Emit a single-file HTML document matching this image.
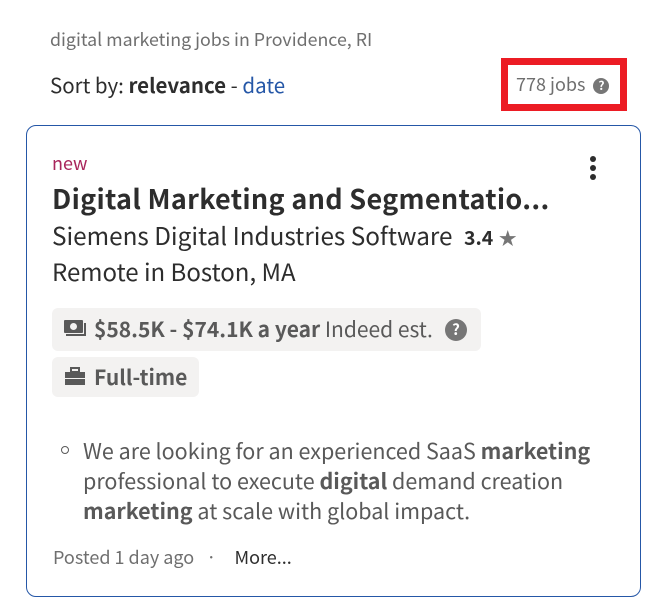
<!DOCTYPE html>
<html><head><meta charset="utf-8"><style>
*{margin:0;padding:0;box-sizing:border-box}
body{width:664px;height:605px;background:#fff;font-family:"Noto Sans CJK JP","Liberation Sans",sans-serif;color:#2d2d2d;position:relative;overflow:hidden}
.abs{position:absolute;white-space:nowrap}
.q{display:inline-block;border-radius:50%;background:#767676;color:#fff;font-weight:bold;text-align:center}
</style></head><body>
<div class="abs" style="left:50px;top:28px;font-size:17.8px;color:#6f6f6f;line-height:22px">digital marketing jobs in Providence, RI</div>
<div class="abs" style="left:50px;top:70px;font-size:20.5px;line-height:28px">Sort by: <b>relevance</b> - <span style="color:#2557a7">date</span></div>
<div class="abs" style="left:501px;top:58px;width:126px;height:53px;border:7px solid #ec1c24"></div>
<div class="abs" style="left:516px;top:72px;font-size:18px;color:#6f6f6f;line-height:24px">778 jobs <span class="q" style="width:16px;height:16px;font-size:12px;line-height:16px;vertical-align:1px;margin-left:4px">?</span></div>
<div class="abs" style="left:26px;top:125px;width:615px;height:472px;border:1px solid #2557a7;border-radius:10px"></div>
<div class="abs" style="left:52px;top:151px;font-size:18px;color:#a9255b;line-height:24px">new</div>
<div class="abs" style="left:590px;top:156px;width:6px">
<div style="width:6px;height:6px;border-radius:50%;background:#2d2d2d;margin-bottom:3px"></div>
<div style="width:6px;height:6px;border-radius:50%;background:#2d2d2d;margin-bottom:3px"></div>
<div style="width:6px;height:6px;border-radius:50%;background:#2d2d2d"></div></div>
<div class="abs" style="left:52px;top:181px;font-size:27px;font-weight:bold;line-height:34px;letter-spacing:0.3px">Digital Marketing and Segmentatio...</div>
<div class="abs" style="left:52px;top:219px;font-size:24.3px;line-height:32px">Siemens Digital Industries Software <span style="font-size:19.5px;font-weight:bold;margin-left:6px">3.4</span> <span style="color:#767676;font-size:18px">★</span></div>
<div class="abs" style="left:52px;top:255px;font-size:24px;line-height:32px">Remote in Boston, MA</div>
<div class="abs" style="left:52px;top:308px;width:429px;height:43px;background:#f3f2f1;border-radius:6px"></div>
<svg class="abs" style="left:63px;top:319px" width="24" height="20" viewBox="0 0 24 20"><rect x="1" y="1" width="19" height="13" rx="1" fill="#595959"/><circle cx="10.5" cy="7.5" r="3.5" fill="#f3f2f1"/><path d="M3 16h19v-12" stroke="#595959" stroke-width="2" fill="none"/></svg>
<div class="abs" style="left:94px;top:315px;font-size:21px;line-height:28px;color:#595959"><b>$58.5K - $74.1K a year</b> Indeed est.</div>
<span class="abs q" style="left:445px;top:319px;width:22px;height:22px;font-size:15px;line-height:22px">?</span>
<div class="abs" style="left:52px;top:357px;width:147px;height:40px;background:#f3f2f1;border-radius:6px"></div>
<svg class="abs" style="left:64px;top:367px" width="22" height="19" viewBox="0 0 22 19"><rect x="7" y="1" width="8" height="4" fill="none" stroke="#595959" stroke-width="2"/><rect x="1" y="5" width="20" height="6" fill="#595959"/><rect x="1" y="12" width="20" height="6" fill="#595959"/></svg>
<div class="abs" style="left:94px;top:363px;font-size:21px;line-height:28px;font-weight:bold;color:#595959">Full-time</div>
<div class="abs" style="left:61px;top:446px;width:8px;height:8px;border:1.5px solid #595959;border-radius:50%"></div>
<div class="abs" style="left:83px;top:436px;font-size:21.5px;line-height:30px;color:#595959;white-space:normal;width:560px">We are looking for an experienced SaaS <b>marketing</b><br>professional to execute <b>digital</b> demand creation<br><b>marketing</b> at scale with global impact.</div>
<div class="abs" style="left:53px;top:545px;font-size:18px;line-height:24px;color:#6f6f6f">Posted 1 day ago &nbsp; · &nbsp; <span style="color:#2d2d2d;margin-left:6px">More...</span></div>
</body></html>
